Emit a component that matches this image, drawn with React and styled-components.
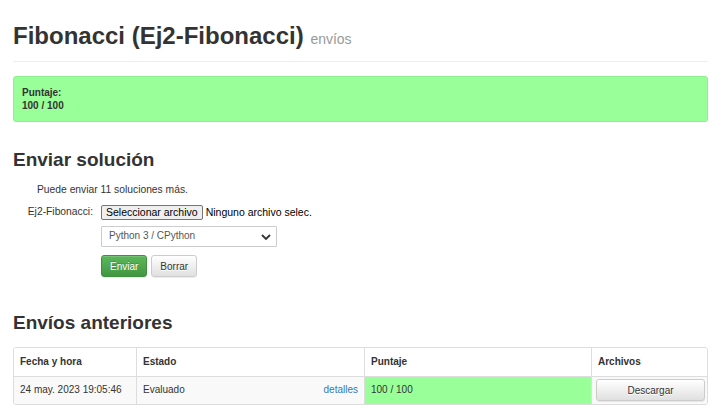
import styled, { createGlobalStyle } from "styled-components";

const GlobalStyle = createGlobalStyle`
  html, body {
    margin: 0;
    padding: 0;
    background: #ffffff;
  }
  body {
    font-family: "Liberation Sans", Arial, Helvetica, sans-serif;
    font-size: 10.5px;
    line-height: 1.43;
    color: #333333;
  }
`;

const Page = styled.div`
  padding: 0 5px 0 13px;
`;

const PageHeader = styled.div`
  padding: 23px 0 12px;
  border-bottom: 1px solid #eeeeee;
  margin-bottom: 14px;
`;

const Title = styled.h1`
  margin: 0;
  font-size: 24px;
  font-weight: bold;
  line-height: 1.1;
  color: #333333;

  small {
    font-size: 14px;
    font-weight: normal;
    color: #999999;
  }
`;

const ScoreBox = styled.div`
  background: #99ff99;
  border: 1px solid #8ef08e;
  border-radius: 3px;
  padding: 9px 8px 9px;
  font-weight: bold;
  font-size: 10px;
  line-height: 13px;
`;

const SectionTitle = styled.h2`
  margin: ${(p) => p.$top || "28px"} 0 ${(p) => p.$bottom || "12px"};
  font-size: 19px;
  font-weight: bold;
  line-height: 1.1;
`;

const Note = styled.p`
  margin: 0 0 7px 24px;
  font-size: 10.3px;
`;

const FormRow = styled.div`
  display: flex;
  align-items: center;
  margin-bottom: ${(p) => p.$gap || "6px"};
`;

const Label = styled.label`
  width: 80px;
  text-align: right;
  padding-right: 8px;
  font-size: 10.3px;
  flex-shrink: 0;
`;

const Spacer = styled.div`
  width: 88px;
  flex-shrink: 0;
`;

const FileButton = styled.span`
  display: inline-block;
  background: #efefef;
  border: 1px solid #767676;
  border-radius: 2px;
  padding: 0 4px;
  height: 13px;
  line-height: 13px;
  font-size: 10.5px;
  color: #000;
`;

const FileName = styled.span`
  margin-left: 3px;
  font-size: 10.5px;
  color: #000;
`;

const SelectBox = styled.div`
  box-sizing: border-box;
  width: 176px;
  height: 21px;
  border: 1px solid #cccccc;
  border-radius: 1px;
  display: flex;
  align-items: center;
  justify-content: space-between;
  padding: 0 5px 0 7px;
  font-size: 10px;
  color: #555555;
`;

const Buttons = styled.div`
  display: flex;
  gap: 4px;
`;

const Button = styled.button`
  font-family: inherit;
  font-size: 10px;
  height: 22px;
  padding: 0 8px;
  border-radius: 3px;
  cursor: pointer;
  color: ${(p) => (p.$primary ? "#ffffff" : "#333333")};
  border: 1px solid ${(p) => (p.$primary ? "#3e8f3e" : "#cccccc")};
  background: ${(p) =>
    p.$primary
      ? "linear-gradient(to bottom, #5cb85c 0%, #419641 100%)"
      : "linear-gradient(to bottom, #ffffff 0%, #e0e0e0 100%)"};
  text-shadow: ${(p) =>
    p.$primary ? "0 -1px 0 rgba(0,0,0,0.2)" : "0 1px 0 #fff"};
  box-shadow: inset 0 1px 0 rgba(255, 255, 255, 0.15),
    0 1px 1px rgba(0, 0, 0, 0.075);
  width: ${(p) => p.$width || "auto"};
`;

const Table = styled.div`
  display: grid;
  grid-template-columns: 122px 228px 227px 1fr;
  border: 1px solid #dddddd;
  border-radius: 3px;
  overflow: hidden;
  font-size: 10px;
`;

const Cell = styled.div`
  box-sizing: border-box;
  height: 28px;
  display: flex;
  align-items: center;
  justify-content: ${(p) => (p.$spread ? "space-between" : "flex-start")};
  padding: 0 ${(p) => (p.$tight ? "2px" : "6px")} 0
    ${(p) => (p.$tight ? "4px" : "6px")};
  border-left: ${(p) => (p.$first ? "none" : "1px solid #dddddd")};
  border-top: ${(p) => (p.$head ? "none" : "1px solid #dddddd")};
  font-weight: ${(p) => (p.$head ? "bold" : "normal")};
  background: ${(p) => p.$bg || (p.$head ? "#ffffff" : "#f9f9f9")};
`;

const Link = styled.a`
  color: #337ab7;
  text-decoration: none;
`;

function Chevron() {
  return (
    <svg width="10" height="8" viewBox="0 0 10 8">
      <path d="M1 2 L5 6 L9 2" fill="none" stroke="#333" strokeWidth="1.8" />
    </svg>
  );
}

export default function App() {
  return (
    <>
      <GlobalStyle />
      <Page>
        <PageHeader>
          <Title>
            Fibonacci (Ej2-Fibonacci) <small>envíos</small>
          </Title>
        </PageHeader>
        <ScoreBox>
          <div>Puntaje:</div>
          <div>100 / 100</div>
        </ScoreBox>

        <SectionTitle>Enviar solución</SectionTitle>
        <Note>Puede enviar 11 soluciones más.</Note>
        <FormRow>
          <Label>Ej2-Fibonacci:</Label>
          <FileButton>Seleccionar archivo</FileButton>
          <FileName>Ninguno archivo selec.</FileName>
        </FormRow>
        <FormRow $gap="8px">
          <Spacer />
          <SelectBox>
            <span>Python 3 / CPython</span>
            <Chevron />
          </SelectBox>
        </FormRow>
        <FormRow>
          <Spacer />
          <Buttons>
            <Button $primary>Enviar</Button>
            <Button>Borrar</Button>
          </Buttons>
        </FormRow>

        <SectionTitle $top="36px" $bottom="13px">
          Envíos anteriores
        </SectionTitle>
        <Table>
          <Cell $head $first>Fecha y hora</Cell>
          <Cell $head>Estado</Cell>
          <Cell $head>Puntaje</Cell>
          <Cell $head>Archivos</Cell>
          <Cell $first>24 may. 2023 19:05:46</Cell>
          <Cell $spread>
            <span>Evaluado</span>
            <Link href="#">detalles</Link>
          </Cell>
          <Cell $bg="#99ff99">100 / 100</Cell>
          <Cell $tight>
            <Button $width="100%">Descargar</Button>
          </Cell>
        </Table>
      </Page>
    </>
  );
}
